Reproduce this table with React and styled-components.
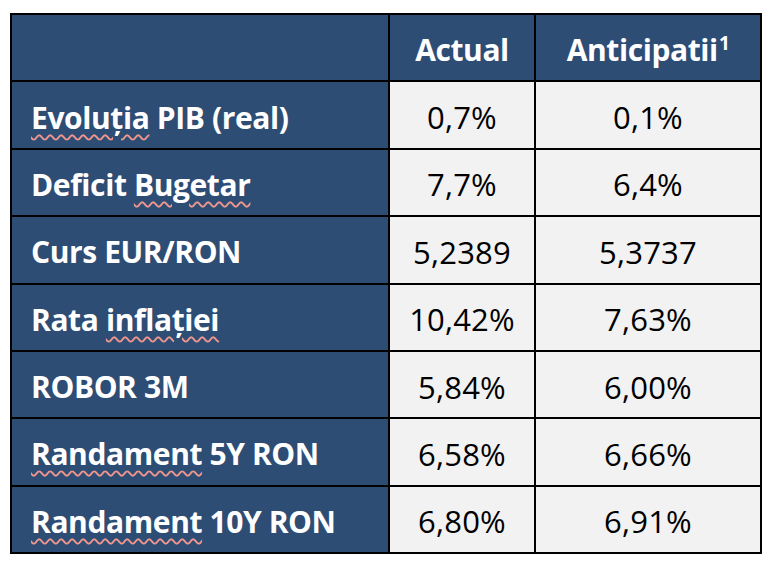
import { Fragment } from "react";
import styled, { createGlobalStyle } from "styled-components";

const GlobalStyle = createGlobalStyle`
    html, body {
        margin: 0;
        padding: 0;
        background: #fff;
    }
    body {
        font-family: "Open Sans", Lato, "Liberation Sans", sans-serif;
    }
`;

const Page = styled.div`
    width: 770px;
    height: 568px;
    padding: 13px 0 0 10px;
    box-sizing: border-box;
`;

const Table = styled.div`
    display: grid;
    grid-template-columns: 376px 144px 224px;
    grid-template-rows: repeat(8, 1fr);
    gap: 2px;
    padding: 2px;
    width: 752px;
    height: 541px;
    box-sizing: border-box;
    background: #000;
`;

const Cell = styled.div`
    display: flex;
    align-items: center;
    justify-content: ${({ $label }) => ($label ? "flex-start" : "center")};
    padding: ${({ $label }) => ($label ? "4px 0 0 19px" : "4px 0 0 0")};
    background: ${({ $dark }) => ($dark ? "#2d4d75" : "#f2f2f2")};
    color: ${({ $dark }) => ($dark ? "#fff" : "#000")};
    font-size: ${({ $dark }) => ($dark ? "30px" : "31px")};
    font-weight: ${({ $dark }) => ($dark ? 700 : 400)};
    letter-spacing: ${({ $dark }) => ($dark ? "-0.4px" : "0.2px")};
    white-space: nowrap;
`;

// spellcheck squiggle under words Word doesn't know
const Typo = styled.span`
    text-decoration-line: underline;
    text-decoration-style: wavy;
    text-decoration-color: #f0968c;
    text-decoration-thickness: 1.5px;
    text-underline-offset: 5px;
`;

const Sup = styled.sup`
    font-size: 19px;
    line-height: 0;
    vertical-align: 11px;
    margin-left: 1px;
`;

const rows = [
    { label: <><Typo>Evoluția</Typo> PIB (real)</>, actual: "0,7%", forecast: "0,1%" },
    { label: <>Deficit <Typo>Bugetar</Typo></>, actual: "7,7%", forecast: "6,4%" },
    { label: "Curs EUR/RON", actual: "5,2389", forecast: "5,3737" },
    { label: <>Rata <Typo>inflației</Typo></>, actual: "10,42%", forecast: "7,63%" },
    { label: "ROBOR 3M", actual: "5,84%", forecast: "6,00%" },
    { label: <><Typo>Randament</Typo> 5Y RON</>, actual: "6,58%", forecast: "6,66%" },
    { label: <><Typo>Randament</Typo> 10Y RON</>, actual: "6,80%", forecast: "6,91%" },
];

export default function App() {
    return (
        <Page>
            <GlobalStyle />
            <Table>
                <Cell $dark />
                <Cell $dark>Actual</Cell>
                <Cell $dark><span>Anticipatii<Sup>1</Sup></span></Cell>
                {rows.map((row, i) => (
                    <Fragment key={i}>
                        <Cell $dark $label><span>{row.label}</span></Cell>
                        <Cell>{row.actual}</Cell>
                        <Cell>{row.forecast}</Cell>
                    </Fragment>
                ))}
            </Table>
        </Page>
    );
}
